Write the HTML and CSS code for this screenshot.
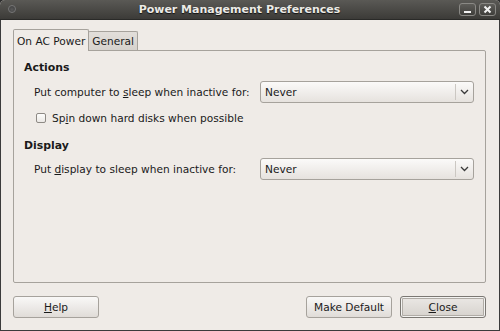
FILE: index.html
```html
<!DOCTYPE html>
<html>
<head>
<meta charset="utf-8">
<link rel="stylesheet" href="styles.css">
</head>
<body>
<div class="window">
  <div class="titlebar">
    <span class="menu-dot"></span>
    <span class="title">Power Management Preferences</span>
    <div class="wbtns">
      <span class="wbtn"><svg width="9" height="9" viewBox="0 0 9 9"><rect x="1" y="6" width="7" height="2" fill="#f2f2f2"/></svg></span>
      <span class="wbtn"><svg width="9" height="9" viewBox="0 0 9 9"><path d="M1.5 1.5 L7.5 7.5 M7.5 1.5 L1.5 7.5" stroke="#f2f2f2" stroke-width="2"/></svg></span>
    </div>
  </div>
  <div class="content">
    <div class="tabs">
      <div class="tab active">On AC Power</div>
      <div class="tab">General</div>
    </div>
    <div class="panel">
      <div class="section">Actions</div>
      <div class="row">
        <span class="label">Put computer to <u>s</u>leep when inactive for:</span>
        <div class="combo"><span class="combo-text">Never</span><span class="combo-arrow"><svg width="9" height="6" viewBox="0 0 9 6"><path d="M1 1 L4.5 4.5 L8 1" fill="none" stroke="#3a3a3a" stroke-width="1.3"/></svg></span></div>
      </div>
      <div class="check-row">
        <span class="checkbox"></span>
        <span>Sp<u>i</u>n down hard disks when possible</span>
      </div>
      <div class="section second">Display</div>
      <div class="row row2">
        <span class="label">Put <u>d</u>isplay to sleep when inactive for:</span>
        <div class="combo"><span class="combo-text">Never</span><span class="combo-arrow"><svg width="9" height="6" viewBox="0 0 9 6"><path d="M1 1 L4.5 4.5 L8 1" fill="none" stroke="#3a3a3a" stroke-width="1.3"/></svg></span></div>
      </div>
    </div>
    <div class="buttons">
      <div class="btn"><span><u>H</u>elp</span></div>
      <div class="spacer"></div>
      <div class="btn">Make Default</div>
      <div class="btn default"><span><u>C</u>lose</span></div>
    </div>
  </div>
</div>
</body>
</html>
```
FILE: styles.css
```css
html, body {
  margin: 0;
  padding: 0;
  background: #2e2e2e;
}
body {
  width: 500px;
  height: 331px;
  overflow: hidden;
  font-family: "DejaVu Sans", sans-serif;
  font-size: 10.6px;
  color: #1a1a1a;
}
.window {
  width: 500px;
  height: 331px;
  box-sizing: border-box;
  display: flex;
  flex-direction: column;
  background: #efebe7;
  border-radius: 5px 5px 0 0;
  overflow: hidden;
}
.titlebar {
  height: 20px;
  flex: none;
  display: flex;
  align-items: center;
  background: linear-gradient(#5a5955, #3c3b38);
  border-bottom: 1px solid #2a2a28;
  box-sizing: border-box;
}
.menu-dot {
  width: 8px;
  height: 8px;
  border-radius: 50%;
  margin-left: 8px;
  margin-top: -2px;
  background: radial-gradient(circle at 50% 60%, #5b5b5b, #3a3a3a);
  border: 1px solid #777;
  box-sizing: border-box;
}
.title {
  flex: 1;
  text-align: center;
  color: #ecebe6;
  font-weight: bold;
  font-size: 11px;
  text-shadow: 0 1px 1px #111;
  padding-left: 4px;
  margin-top: -1px;
}
.wbtns {
  display: flex;
  gap: 3px;
  margin-right: 4px;
  margin-top: -1px;
}
.wbtn {
  width: 17px;
  height: 13px;
  box-sizing: border-box;
  border: 1px solid #8a8985;
  border-radius: 3px;
  background: linear-gradient(#5e5d59, #3f3e3b);
  display: flex;
  align-items: center;
  justify-content: center;
}
.content {
  flex: 1;
  display: flex;
  flex-direction: column;
  padding: 9px 13px 0 13px;
  border-left: 1px solid #3b3b3b;
  border-right: 1px solid #3b3b3b;
  border-bottom: 1px solid #3b3b3b;
  box-sizing: border-box;
  min-height: 0;
}
.tabs {
  display: flex;
  align-items: flex-end;
  height: 21px;
  margin-left: -1px;
  position: relative;
  z-index: 1;
}
.tab {
  box-sizing: border-box;
  border: 1px solid #a6a29c;
  border-bottom: none;
  border-radius: 2px 2px 0 0;
  padding: 0 3px;
  display: flex;
  align-items: center;
}
.tab.active {
  height: 22px;
  background: #efebe7;
  margin-bottom: -1px;
}
.tab:not(.active) {
  height: 19px;
  background: linear-gradient(#e2deda, #d6d2cd);
  margin-left: -1px;
}
.panel {
  height: 233px;
  box-sizing: border-box;
  border: 1px solid #a6a29c;
  border-radius: 0 2px 2px 2px;
  padding: 10px 11px 0 10px;
  margin-left: -1px;
}
.section {
  font-weight: bold;
  font-size: 10.9px;
  height: 14px;
  line-height: 14px;
}
.section.second {
  margin-top: 12px;
}
.row {
  display: flex;
  align-items: center;
  margin-top: 5px;
  padding-left: 10px;
  height: 24px;
}
.row.row2 {
  margin-top: 4px;
}
.label {
  flex: 1;
}
.combo {
  width: 214px;
  height: 22px;
  box-sizing: border-box;
  border: 1px solid #a6a29c;
  border-radius: 3px;
  background: linear-gradient(#fbfaf9, #e6e2de);
  display: flex;
  align-items: center;
}
.combo-text {
  flex: 1;
  padding-left: 4px;
}
.combo-arrow {
  width: 17px;
  height: 16px;
  border-left: 1px solid #cbc7c2;
  display: flex;
  align-items: center;
  justify-content: center;
}
.check-row {
  display: flex;
  align-items: center;
  gap: 6px;
  padding-left: 12px;
  height: 18px;
  margin-top: 5px;
}
.checkbox {
  width: 10px;
  height: 10px;
  box-sizing: border-box;
  border: 1px solid #8e8a85;
  border-radius: 2px;
  background: linear-gradient(#fdfdfc, #ebe8e5);
}
.buttons {
  display: flex;
  margin-top: 13px;
  gap: 8px;
  margin-left: -1px;
}
.spacer {
  flex: 1;
}
.btn {
  width: 86px;
  height: 22px;
  box-sizing: border-box;
  border: 1px solid #a6a29c;
  border-radius: 3px;
  background: linear-gradient(#f9f8f7, #e0dcd8);
  display: flex;
  align-items: center;
  justify-content: center;
}
.btn.default {
  border: 1px solid #7b7873;
  box-shadow: inset 0 0 0 1px #f4f3f1, inset 0 0 0 2px #b0aca6;
  background: linear-gradient(#ebe8e5, #d6d2cd);
}
u {
  text-decoration-thickness: 1px;
  text-underline-offset: 1px;
}
```
